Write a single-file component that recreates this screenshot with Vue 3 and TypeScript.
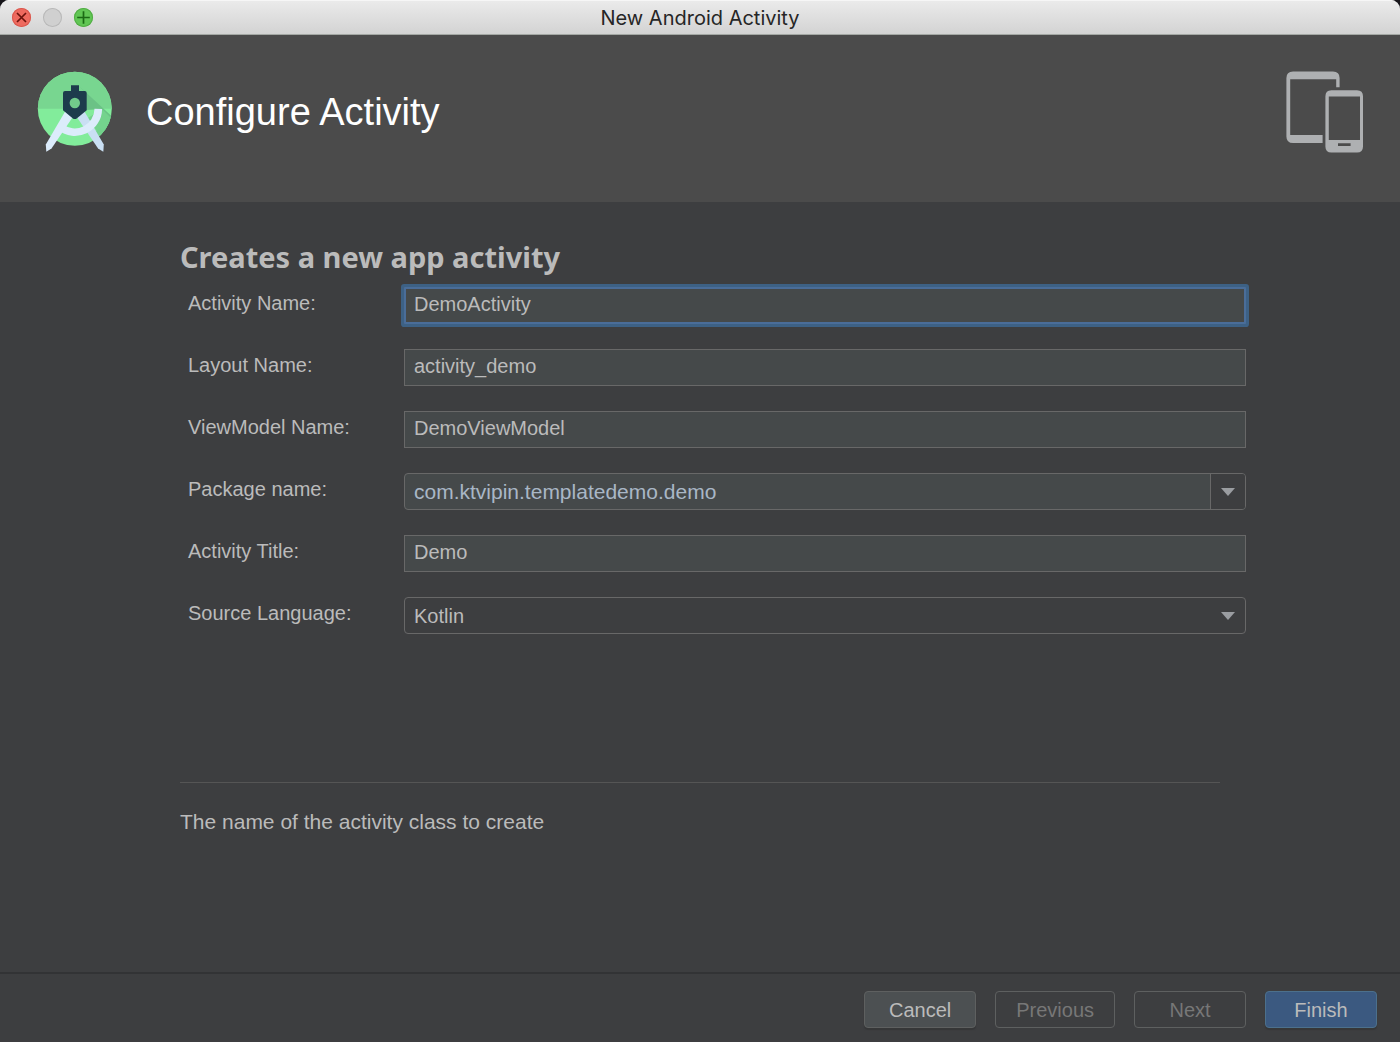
<script setup lang="ts">
import { reactive } from 'vue'

type FieldKind = 'text' | 'combo' | 'select'

interface Field {
  id: string
  label: string
  kind: FieldKind
  active?: boolean
}

const fields: Field[] = [
  { id: 'activity-name', label: 'Activity Name:', kind: 'text', active: true },
  { id: 'layout-name', label: 'Layout Name:', kind: 'text' },
  { id: 'view-model-name', label: 'ViewModel Name:', kind: 'text' },
  { id: 'package-name', label: 'Package name:', kind: 'combo' },
  { id: 'activity-title', label: 'Activity Title:', kind: 'text' },
  { id: 'source-language', label: 'Source Language:', kind: 'select' },
]

const values = reactive<Record<string, string>>({
  'activity-name': 'DemoActivity',
  'layout-name': 'activity_demo',
  'view-model-name': 'DemoViewModel',
  'package-name': 'com.ktvipin.templatedemo.demo',
  'activity-title': 'Demo',
  'source-language': 'Kotlin',
})

const languages: string[] = ['Kotlin', 'Java']
</script>

<template>
  <div class="window">
    <header class="titlebar">
      <div class="lights">
        <button class="light close" type="button" aria-label="Close">
          <svg viewBox="0 0 19 19"><path d="M5 5l9 9M14 5l-9 9" stroke="#6b130d" stroke-width="1.7" /></svg>
        </button>
        <button class="light minimize" type="button" aria-label="Minimize" disabled></button>
        <button class="light zoom" type="button" aria-label="Zoom">
          <svg viewBox="0 0 19 19"><path d="M9.5 3.2v12.6M3.2 9.5h12.6" stroke="#1b6a14" stroke-width="1.7" /></svg>
        </button>
      </div>
      <span class="window-title">New Android Activity</span>
    </header>

    <section class="banner">
      <svg class="logo" viewBox="37 71 76 82" aria-hidden="true">
        <defs>
          <clipPath id="disc"><circle cx="74.8" cy="108.7" r="37" /></clipPath>
        </defs>
        <circle cx="74.8" cy="108.7" r="37" fill="#82ec9b" />
        <path d="M37.8 108.7a37 37 0 0 1 74 0z" fill="#78d690" />
        <g clip-path="url(#disc)">
          <path d="M79 86L118 122L104 132L102 109L86 110V93z" fill="#6bc286" />
          <path d="M88 118L102 109L115 122L100 136z" fill="#74d38d" />
          <path d="M94 133L100 128L112 140L102 146z" fill="#72d18b" />
        </g>
        <path d="M66 110L72.8 117L51.5 148.4L46.3 151.8L45.8 144.4z" fill="#dcecfb" />
        <path d="M83.6 110L76.8 117L98.1 148.4L103.3 151.8L103.8 144.4z" fill="#c9dff3" />
        <path d="M98.3 108.9A23.5 23.5 0 0 1 60.2 127.1" fill="none" stroke="#dcecfb" stroke-width="7.6" />
        <path d="M65 91h6v-5.800h8V91h5.700q2 0 2 2v17.300L77 118.200q-2.200 1.800-4.400 0L63 110.300V93q0-2 2-2z" fill="#1d3b4c" />
        <circle cx="74.8" cy="103" r="5.2" fill="#72cb8b" />
      </svg>
      <h1>Configure Activity</h1>
      <svg class="devices" viewBox="1286 71 78 82" aria-hidden="true">
        <path
          d="M1293 71.4h40q6.6 0 6.6 6.6v9.2h-3.4V79.2h-46V135h32.4v8h-29.6q-6.6 0-6.6-6.6V78q0-6.6 6.6-6.6z"
          fill="#aeb0b2"
        />
        <path
          d="M1331.4 90.2h25.6q6 0 6 6v50.4q0 6-6 6h-25.6q-6 0-6-6V96.200q0-6 6-6zM1328.800 96.400v43.600h31.200V96.400zM1338 143.200v2.800h12.600v-2.800z"
          fill="#aeb0b2"
          fill-rule="evenodd"
        />
      </svg>
    </section>

    <main class="content">
      <h2>Creates a new app activity</h2>

      <form class="fields" @submit.prevent>
        <div v-for="field in fields" :key="field.id" class="row">
          <label :for="field.id">{{ field.label }}</label>

          <input
            v-if="field.kind === 'text'"
            :id="field.id"
            v-model="values[field.id]"
            class="box"
            :class="{ active: field.active }"
            type="text"
            spellcheck="false"
          />

          <div v-else-if="field.kind === 'combo'" class="box combo">
            <input :id="field.id" v-model="values[field.id]" type="text" spellcheck="false" />
            <button type="button" aria-label="Show packages">
              <svg class="arrow" viewBox="0 0 14 8"><path d="M0 0h14L7 8z" /></svg>
            </button>
          </div>

          <div v-else class="choice">
            <select :id="field.id" v-model="values[field.id]" class="box">
              <option v-for="language in languages" :key="language">{{ language }}</option>
            </select>
            <svg class="arrow" viewBox="0 0 14 8" aria-hidden="true"><path d="M0 0h14L7 8z" /></svg>
          </div>
        </div>
      </form>

      <p class="hint">The name of the activity class to create</p>
    </main>

    <footer class="actions">
      <button class="action" type="button">Cancel</button>
      <button class="action" type="button" disabled>Previous</button>
      <button class="action" type="button" disabled>Next</button>
      <button class="action primary" type="button">Finish</button>
    </footer>
  </div>
</template>

<style>
body {
  background: #17151a;
}
</style>

<style scoped>
.window {
  display: flex;
  flex-direction: column;
  min-height: 100vh;
  overflow: hidden;
  border-radius: 9px 9px 0 0;
  background: #3d3e40;
  color: #bbbbbb;
  font-family: 'Liberation Sans', Arial, sans-serif;
  font-size: 20px;
  line-height: 24px;
}

button,
input,
select {
  box-sizing: border-box;
  margin: 0;
  font: inherit;
  color: inherit;
}

.titlebar {
  display: grid;
  grid-template-columns: 1fr auto 1fr;
  align-items: center;
  box-sizing: border-box;
  height: 35px;
  padding: 0 12px;
  border-bottom: 1px solid #a4a8a4;
  background: linear-gradient(#ebebeb, #d3d3d3);
  box-shadow: inset 0 1px #f6f6f6;
}

.lights {
  display: flex;
  gap: 12px;
}

.light {
  display: block;
  width: 19px;
  height: 19px;
  padding: 0;
  border: 0;
  border-radius: 50%;
}

.light svg {
  display: block;
}

.close {
  background: #ee6a5f;
  box-shadow: inset 0 0 0 1px #d9584e;
}

.minimize {
  background: #d0d0d0;
  box-shadow: inset 0 0 0 1px #b8b8b8;
}

.zoom {
  background: #61c654;
  box-shadow: inset 0 0 0 1px #52ab45;
}

.window-title {
  padding-top: 2px;
  color: #262626;
  font-family: Inter, Roboto, sans-serif;
}

.banner {
  display: flex;
  align-items: flex-start;
  box-sizing: border-box;
  height: 167px;
  padding: 36px 36px 0 37px;
  background: #4b4b4b;
}

.logo {
  width: 76px;
  height: 82px;
}

.devices {
  width: 78px;
  height: 82px;
  margin-left: auto;
}

h1 {
  margin: 0 0 0 33px;
  color: #ffffff;
  font-size: 38px;
  font-weight: 400;
  line-height: 82px;
}

.content {
  flex: 1;
  padding: 35px 180px;
}

h2 {
  margin: 0;
  font-family: 'Noto Sans', sans-serif;
  font-size: 29px;
  font-weight: 700;
  line-height: 40px;
}

.fields {
  display: flex;
  flex-direction: column;
  gap: 25px;
  margin: 10px -26px 0 8px;
}

.row {
  display: flex;
}

label {
  width: 216px;
  line-height: 32px;
}

.box {
  flex: 1;
  min-width: 0;
  height: 37px;
  padding: 0 9px 2px;
  border: 1px solid #686868;
  border-radius: 0;
  outline: 0;
  background: #45494a;
}

.box.active {
  padding: 0 8px 2px;
  border: 2px solid #4a6d99;
  border-radius: 1px;
  box-shadow: 0 0 0 3px #3d6185;
}

.combo {
  display: flex;
  box-sizing: border-box;
  padding: 0;
  overflow: hidden;
  border-radius: 4px;
}

.combo input {
  flex: 1;
  min-width: 0;
  padding: 1px 9px 0;
  border: 0;
  outline: 0;
  background: transparent;
  color: #a9b7c6;
  font-size: 21px;
}

.combo button {
  display: flex;
  align-items: center;
  justify-content: center;
  width: 35px;
  padding: 0;
  border: 0;
  border-left: 1px solid #686868;
  background: #3d3e40;
}

.arrow {
  width: 14px;
  height: 8px;
  fill: #9a9da1;
}

.choice {
  position: relative;
  display: flex;
  flex: 1;
}

.choice select {
  padding: 1px 9px 0;
  border-radius: 4px;
  background: #3d3e40;
  appearance: none;
}

.choice .arrow {
  position: absolute;
  top: 15px;
  right: 11px;
  pointer-events: none;
}

.hint {
  margin: 148px 0 0;
  padding-top: 27px;
  border-top: 1px solid #555555;
  font-size: 21px;
}

.actions {
  display: flex;
  justify-content: flex-end;
  gap: 19px;
  padding: 17px 23px 14px;
  border-top: 2px solid #323335;
}

.action {
  min-width: 112px;
  height: 37px;
  padding: 0 20px;
  border: 1px solid #5e6060;
  border-radius: 4px;
  background: #4c5052;
  box-shadow: 0 2px 1px #363738;
}

.action:disabled {
  background: transparent;
  box-shadow: none;
  color: #777777;
}

.action.primary {
  border-color: #4c708c;
  background: #3b5980;
}
</style>
